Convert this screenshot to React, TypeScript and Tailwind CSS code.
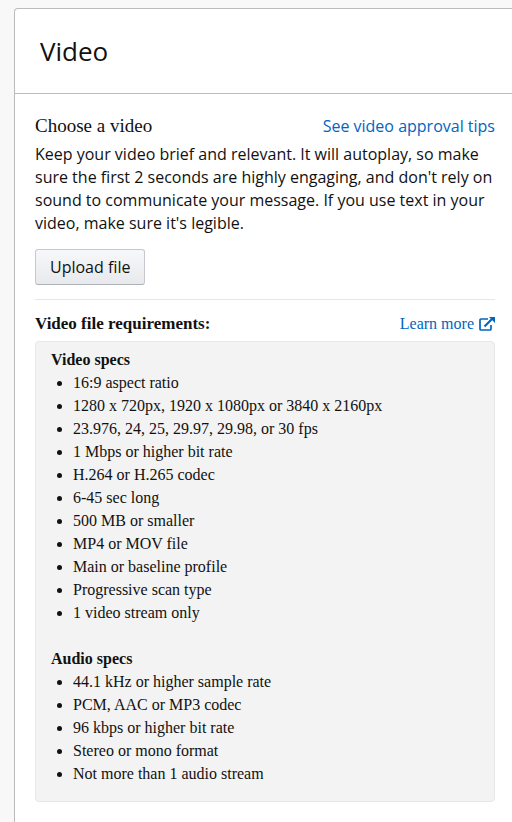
import React from "react";

const videoSpecs = [
  "16:9 aspect ratio",
  "1280 x 720px, 1920 x 1080px or 3840 x 2160px",
  "23.976, 24, 25, 29.97, 29.98, or 30 fps",
  "1 Mbps or higher bit rate",
  "H.264 or H.265 codec",
  "6-45 sec long",
  "500 MB or smaller",
  "MP4 or MOV file",
  "Main or baseline profile",
  "Progressive scan type",
  "1 video stream only",
];

const audioSpecs = [
  "44.1 kHz or higher sample rate",
  "PCM, AAC or MP3 codec",
  "96 kbps or higher bit rate",
  "Stereo or mono format",
  "Not more than 1 audio stream",
];

function SpecList({ title, items }: { title: string; items: string[] }) {
  return (
    <section>
      <h4 className="font-bold">{title}</h4>
      <ul className="list-disc pl-[22px]">
        {items.map((item) => (
          <li key={item}>{item}</li>
        ))}
      </ul>
    </section>
  );
}

function ExternalIcon() {
  return (
    <svg viewBox="0 0 16 16" className="size-4" fill="none" stroke="currentColor" strokeWidth="1.7" aria-hidden="true">
      <path d="M9 3H2Q1 3 1 4V13Q1 14 2 14H11Q12 14 12 13V9" />
      <path d="M5.500 10.500L13 3" strokeWidth="2.200" />
      <path d="M10 1H16V7Z" fill="currentColor" stroke="none" />
    </svg>
  );
}

export default function App() {
  return (
    <div className="min-h-screen bg-[#f8f8f8] pt-2 pl-3.5 font-['Open_Sans',sans-serif] text-[#111]">
      <main className="min-h-[calc(100vh-8px)] rounded-tl-[4px] border-t border-l border-[#bbb] bg-white">
        <header className="border-b border-[#bbb] px-[25px] py-6">
          <h1 className="text-[26px] leading-9">Video</h1>
        </header>
        <div className="pt-5 pr-[17px] pb-5 pl-5">
          <div className="flex items-center justify-between">
            <h2 className="font-['Liberation_Serif',serif] text-[19px] leading-6">Choose a video</h2>
            <a href="#tips" className="text-base leading-6 text-[#0066c0]">See video approval tips</a>
          </div>
          <p className="mt-[5px] text-base leading-[23px]">
            Keep your video brief and relevant. It will autoplay, so make sure the first 2 seconds are highly engaging, and don't rely on sound to communicate your message. If you use text in your video, make sure it's legible.
          </p>
          <button type="button" className="mt-3.5 h-9 rounded-[3px] border border-[#c5c8cd] border-b-[#adb1b8] bg-linear-to-b from-[#f7f8fa] to-[#e7e9ec] px-3.5 text-base">
            Upload file
          </button>
          <hr className="mt-3.5 border-[#e7e7e7]" />
          <div className="mt-3 flex items-center justify-between font-['Liberation_Serif',serif] leading-6">
            <h3 className="text-[17px] font-bold">Video file requirements:</h3>
            <a href="#more" className="flex items-center gap-[5px] text-base text-[#0066c0]">
              Learn more
              <ExternalIcon />
            </a>
          </div>
          <div className="mt-[5px] flex flex-col gap-[23px] rounded-[4px] border border-[#e7e7e7] bg-[#f3f3f3] px-[15px] pt-1.5 pb-4 font-['Liberation_Serif',serif] text-base leading-[23px]">
            <SpecList title="Video specs" items={videoSpecs} />
            <SpecList title="Audio specs" items={audioSpecs} />
          </div>
        </div>
      </main>
    </div>
  );
}
